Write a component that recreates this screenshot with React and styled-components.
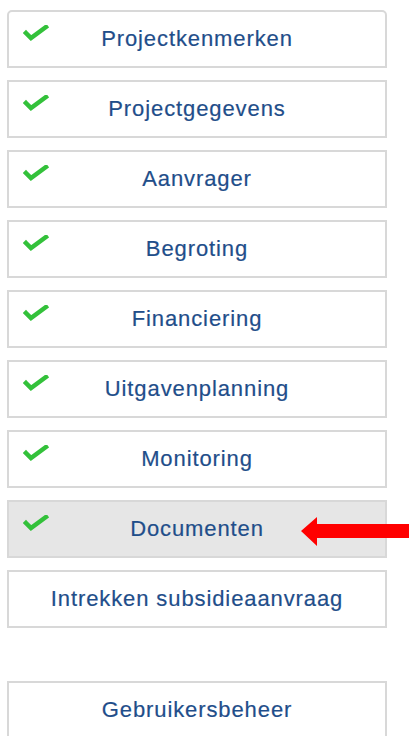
import React from "react"
import styled, { createGlobalStyle } from "styled-components"

const GlobalStyle = createGlobalStyle`
  body {
    margin: 0;
    background: #fff;
    font-family: "Liberation Sans", Arial, sans-serif;
  }
`

const Menu = styled.nav`
  display: flex;
  flex-direction: column;
  width: 380px;
  padding: 10px 0 0 7px;
`

const Group = styled.div`
  display: flex;
  flex-direction: column;
  gap: 12px;
  margin-bottom: ${p => (p.$spaced ? "53px" : "0")};

  &:first-child > *:first-child {
    border-radius: 5px 5px 0 0;
  }
`

const Item = styled.a`
  position: relative;
  display: flex;
  align-items: center;
  justify-content: center;
  box-sizing: border-box;
  height: 58px;
  border: 2px solid #d8d8d8;
  background: ${p => (p.$active ? "#e6e6e6" : "#fff")};
  color: #1f4e8a;
  font-size: 22px;
  letter-spacing: 0.9px;
  -webkit-text-stroke: 0.2px #1f4e8a;
  text-decoration: none;
  cursor: pointer;
`

const Check = styled.svg`
  position: absolute;
  left: 14px;
  top: 13px;
  width: 26px;
  height: 16px;
`

const Pointer = styled.svg`
  position: absolute;
  left: 292px;
  top: 14px;
  width: 112px;
  height: 32px;
  overflow: visible;
`

const CheckMark = () => (
  <Check viewBox="0 0 26 16">
    <polyline
      points="3,8 8,13 23,2"
      fill="none"
      stroke="#33c13a"
      strokeWidth="4.5"
      strokeLinecap="square"
    />
  </Check>
)

const RedArrow = () => (
  <Pointer viewBox="0 0 112 32">
    <polygon points="0,15 16,1 16,8 120,8 120,22 16,22 16,30" fill="#ff0000" />
  </Pointer>
)

const steps = [
  "Projectkenmerken",
  "Projectgegevens",
  "Aanvrager",
  "Begroting",
  "Financiering",
  "Uitgavenplanning",
  "Monitoring",
  "Documenten",
]

const App = () => {
  const active = "Documenten"

  return (
    <>
      <GlobalStyle />
      <Menu>
        <Group $spaced>
          {steps.map(step => (
            <Item key={step} $active={step === active}>
              <CheckMark />
              {step}
              {step === active && <RedArrow />}
            </Item>
          ))}
          <Item>Intrekken subsidieaanvraag</Item>
        </Group>
        <Group>
          <Item>Gebruikersbeheer</Item>
        </Group>
      </Menu>
    </>
  )
}

export default App
